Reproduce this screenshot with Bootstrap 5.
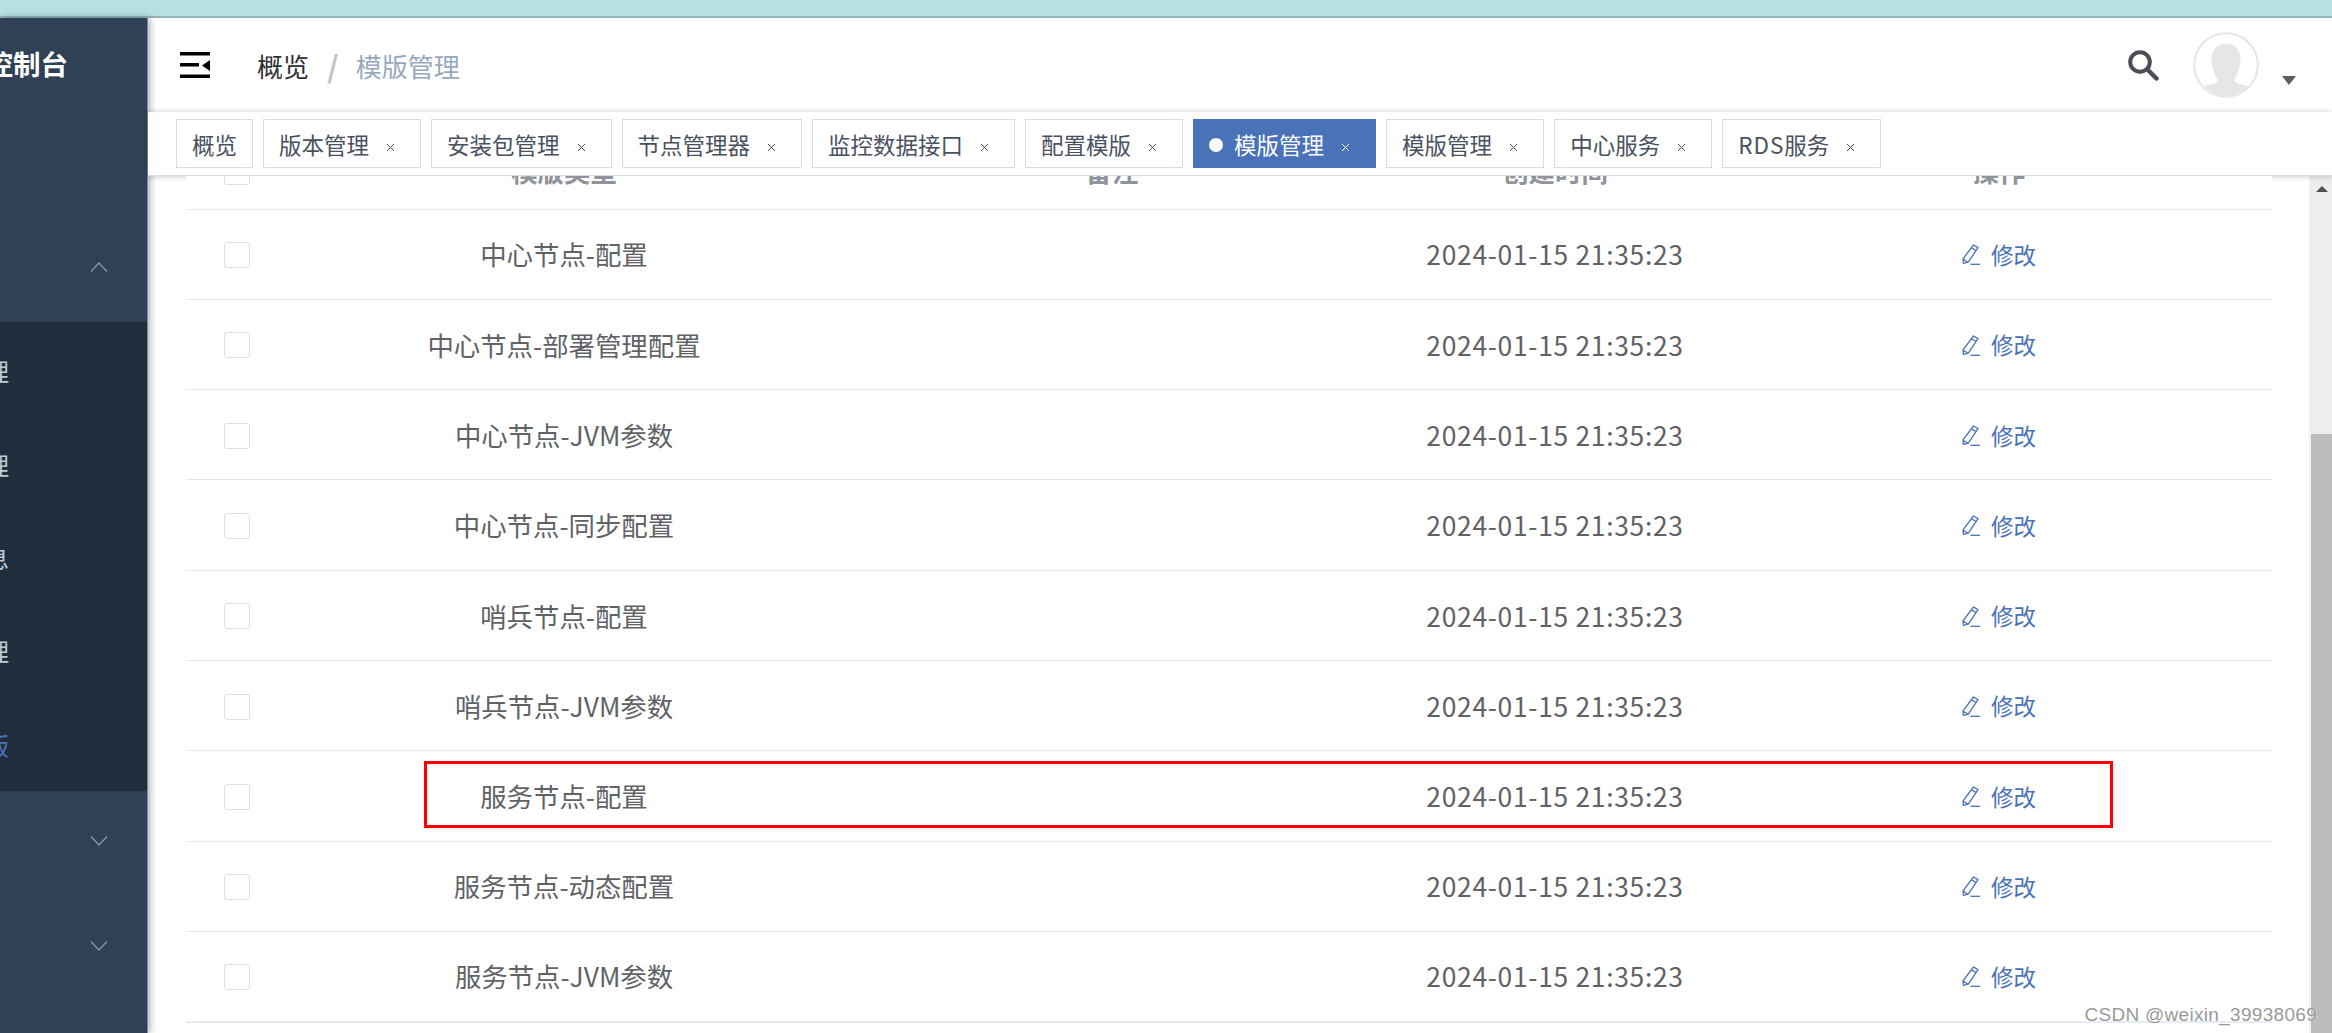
<!DOCTYPE html>
<html lang="zh-CN">
<head>
    <meta charset="utf-8">
    <title>模版管理</title>
    <link href="https://cdn.jsdelivr.net/npm/bootstrap@5.3.3/dist/css/bootstrap.min.css" rel="stylesheet">
    <style>
        html, body {
          height: 100%;
          overflow: hidden;
        }
        body {
          background: #fff;
          font-family: "Noto Sans CJK SC", "Liberation Sans", sans-serif;
          color: #606266;
        }
        .top-strip {
          height: 18px;
          flex: none;
          background: #b7e0e3;
          border-bottom: 2px solid #93b4b7;
        }
        .side-menu {
          width: 148px;
          flex: none;
          background: #304156;
          border-right: 1px solid #7f8a99;
          overflow: hidden;
          position: relative;
          z-index: 1;
          box-shadow: 2px 0 7px rgba(0, 21, 41, .35);
        }
        .side-title {
          height: 199px;
          padding-top: 27px;
          width: 68px;
          font-size: 27.5px;
          font-weight: 700;
          line-height: 36px;
          color: #fff;
          direction: rtl;
          white-space: nowrap;
        }
        .side-parent {
          height: 105px;
          padding: 0 39px 5px 0;
        }
        .side-sub {
          background: #1f2d3d;
          height: 469px;
        }
        .side-item {
          height: 93.4px;
          width: 9px;
          padding-top: 5px;
          font-size: 24px;
          color: #bfcbd9;
          direction: rtl;
          white-space: nowrap;
        }
        .side-item.on {
          color: #4a72b8;
        }
        .main-area {
          min-width: 0;
        }
        .head-bar {
          height: 94px;
          flex: none;
          padding: 0 36px 0 32px;
          background: #fff;
          position: relative;
          z-index: 0;
        }
        .crumb-now {
          margin-left: 47px;
          font-size: 26px;
          color: #303133;
        }
        .crumb-sep {
          margin: 0 17px 0 18px;
          font-size: 30px;
          line-height: 1;
          font-weight: 700;
          color: #c0c4cc;
        }
        .crumb-last {
          font-size: 26px;
          color: #97a8be;
        }
        .user-pic {
          margin-left: 34px;
        }
        .user-caret {
          width: 0;
          height: 0;
          margin: 31px 0 0 23px;
          border-left: 7px solid transparent;
          border-right: 7px solid transparent;
          border-top: 9px solid #5a5e66;
        }
        .tab-strip {
          height: 64px;
          flex: none;
          padding: 7px 0 0 28px;
          gap: 10px;
          background: #fff;
          border-bottom: 1px solid #d8dce5;
          box-shadow: 0 1px 5px rgba(0, 21, 41, .2), 0 -2px 4px rgba(0, 21, 41, .05);
          position: relative;
          z-index: 2;
        }
        .tab-item {
          height: 49px;
          padding: 2px 15px 0;
          border: 1px solid #d8dce5;
          background: #fff;
          font-size: 22.5px;
          color: #495060;
          white-space: nowrap;
        }
        .tab-item.on {
          background: #4a72b8;
          border-color: #4a72b8;
          color: #fff;
        }
        .tab-dot {
          width: 14px;
          height: 14px;
          margin-right: 11px;
          border-radius: 50%;
          background: #fff;
        }
        .tab-x {
          width: 9px;
          height: 9px;
          margin: 5px 10px 0 17px;
        }
        .tab-latin {
          letter-spacing: 1px;
        }
        .table-clip {
          min-width: 0;
          overflow: hidden;
          padding: 0 37px 0 38px;
        }
        .table-inner {
          position: relative;
          z-index: 3;
          background: #fff;
          margin-top: -42px;
        }
        .tpl-table {
          table-layout: fixed;
          width: 2086px;
          margin: 0;
          --bs-border-color: #e4e8ef;
          font-size: 26.4px;
          color: #606266;
        }
        .tpl-table th,
        .tpl-table td {
          padding: 0;
          color: inherit;
          vertical-align: middle;
          text-align: center;
        }
        .tpl-table th {
          height: 75px;
          color: #909399;
          font-weight: 700;
        }
        .tpl-table td {
          height: 90.3px;
        }
        .tpl-table tbody tr:last-child td {
          border-bottom: 2px solid #e6ebf5;
        }
        .date-cell {
          letter-spacing: .7px;
        }
        .tick-box {
          display: block;
          width: 26px;
          height: 26px;
          margin: 2px 0 0 38px;
          border: 1px solid #dcdfe6;
          border-radius: 3px;
          background: #fff;
        }
        .edit-link {
          margin-top: -4px;
          font-size: 22.5px;
          color: #4a72b8;
          text-decoration: none;
          gap: 11px;
        }
        .red-frame {
          position: absolute;
          left: 238px;
          width: 1689px;
          top: 627px;
          height: 67px;
          border: 3px solid #f00;
          pointer-events: none;
        }
        .scroll-rail {
          width: 23px;
          flex: none;
          background: #ededed;
          border-left: 2px solid #f1f1f1;
        }
        .scroll-up {
          width: 0;
          height: 0;
          margin: 10px auto 0;
          border-left: 6px solid transparent;
          border-right: 6px solid transparent;
          border-bottom: 6px solid #505050;
        }
        .scroll-thumb {
          margin-top: 242px;
          background: #bcbcbc;
        }
        .stamp {
          position: absolute;
          right: 15px;
          bottom: 8px;
          z-index: 5;
          font-family: "Liberation Sans", sans-serif;
          font-size: 19px;
          line-height: 20px;
          letter-spacing: .3px;
          color: #999;
          text-shadow: 0 0 2px #fff;
        }
    </style>
</head>
<body class="d-flex flex-column">

<div class="top-strip"></div>

<svg class="d-none">
    <symbol id="pen" viewBox="0 0 18 21">
        <path d="M11.5 1 16 3.6 6.3 18.2 1.4 19.4 1 14.8Z M9.6 3.900 14 6.500 M1.200 15.400 5.800 18" fill="none" stroke="currentColor" stroke-width="1.300" stroke-linejoin="round"/>
        <path d="M8.500 20.300H18" fill="none" stroke="currentColor" stroke-width="1.300"/>
    </symbol>
    <symbol id="x-mark" viewBox="0 0 9 9">
        <path d="M1 1 8 8M8 1 1 8" fill="none" stroke="currentColor" stroke-width="1"/>
    </symbol>
</svg>

<div class="d-flex flex-grow-1" style="min-height:0">

    <!-- Sidebar, cut off at the left edge of the picture -->
    <div class="side-menu">
        <div class="side-title">控制台</div>
        <div class="side-parent d-flex align-items-center justify-content-end">
            <svg width="18" height="10" viewBox="0 0 18 10"><path d="M1 9.500 9 1l8 8.500" fill="none" stroke="#8d97a5" stroke-width="1.200"/></svg>
        </div>
        <div class="side-sub">
            <div class="side-item d-flex align-items-center">版本管理</div>
            <div class="side-item d-flex align-items-center">安装包管理</div>
            <div class="side-item d-flex align-items-center">监控信息</div>
            <div class="side-item d-flex align-items-center">节点管理</div>
            <div class="side-item on d-flex align-items-center">配置模版</div>
        </div>
        <div class="side-parent d-flex align-items-center justify-content-end">
            <svg width="18" height="10" viewBox="0 0 18 10"><path d="M1 .5 9 9l8-8.500" fill="none" stroke="#8d97a5" stroke-width="1.200"/></svg>
        </div>
        <div class="side-parent d-flex align-items-center justify-content-end">
            <svg width="18" height="10" viewBox="0 0 18 10"><path d="M1 .5 9 9l8-8.500" fill="none" stroke="#8d97a5" stroke-width="1.200"/></svg>
        </div>
    </div>

    <div class="main-area flex-grow-1 d-flex flex-column">

        <!-- Header -->
        <div class="head-bar d-flex align-items-center">
            <svg width="30" height="26" viewBox="0 0 30 26">
                <path d="M0 0h30v3.400H0zM0 11h19v3.600H0zM0 22.600h30V26H0zM30 8v11l-8-5.500z" fill="#000"/>
            </svg>
            <span class="crumb-now">概览</span>
            <span class="crumb-sep">/</span>
            <span class="crumb-last">模版管理</span>
            <svg class="ms-auto" width="31" height="31" viewBox="0 0 31 31">
                <circle cx="12" cy="12" r="9.800" fill="none" stroke="#4a4f57" stroke-width="4"/>
                <path d="M19.500 19.500 28.500 28.500" fill="none" stroke="#4a4f57" stroke-width="4.500" stroke-linecap="round"/>
            </svg>
            <svg class="user-pic" width="66" height="66" viewBox="0 0 66 66">
                <circle cx="33" cy="33" r="31.800" fill="#fff" stroke="#e6e6e6" stroke-width="2"/>
                <path d="M33 12c9 0 14.500 6 14.500 15 0 8-3 16-6.500 21l2 3 12 3c-5 6-13 10-22 10s-17-4-22-10l12-3 2-3c-3.500-5-6.500-13-6.500-21 0-9 5.500-15 14.500-15z" fill="#e6e6e6"/>
            </svg>
            <div class="user-caret"></div>
        </div>

        <!-- Open pages -->
        <div class="tab-strip d-flex align-items-start">
            <div class="tab-item d-flex align-items-center">概览</div>
            <div class="tab-item d-flex align-items-center">版本管理<svg class="tab-x"><use href="#x-mark"/></svg></div>
            <div class="tab-item d-flex align-items-center">安装包管理<svg class="tab-x"><use href="#x-mark"/></svg></div>
            <div class="tab-item d-flex align-items-center">节点管理器<svg class="tab-x"><use href="#x-mark"/></svg></div>
            <div class="tab-item d-flex align-items-center">监控数据接口<svg class="tab-x"><use href="#x-mark"/></svg></div>
            <div class="tab-item d-flex align-items-center">配置模版<svg class="tab-x"><use href="#x-mark"/></svg></div>
            <div class="tab-item on d-flex align-items-center"><span class="tab-dot"></span>模版管理<svg class="tab-x"><use href="#x-mark"/></svg></div>
            <div class="tab-item d-flex align-items-center">模版管理<svg class="tab-x"><use href="#x-mark"/></svg></div>
            <div class="tab-item d-flex align-items-center">中心服务<svg class="tab-x"><use href="#x-mark"/></svg></div>
            <div class="tab-item d-flex align-items-center"><span class="tab-latin">RDS</span>服务<svg class="tab-x"><use href="#x-mark"/></svg></div>
        </div>

        <div class="d-flex flex-grow-1" style="min-height:0">
            <div class="table-clip flex-grow-1">
                <div class="table-inner">
                    <table class="table tpl-table">
                        <colgroup>
                            <col style="width:102px"><col style="width:552px"><col style="width:544px"><col style="width:342px"><col style="width:546px">
                        </colgroup>
                        <thead>
                            <tr><th><span class="tick-box"></span></th><th>模版类型</th><th>备注</th><th>创建时间</th><th>操作</th></tr>
                        </thead>
                        <tbody>
                            <tr><td><span class="tick-box"></span></td><td>中心节点-配置</td><td></td><td class="date-cell">2024-01-15 21:35:23</td><td><a class="edit-link d-inline-flex align-items-center" href="#"><svg width="18" height="21"><use href="#pen"/></svg>修改</a></td></tr>
                            <tr><td><span class="tick-box"></span></td><td>中心节点-部署管理配置</td><td></td><td class="date-cell">2024-01-15 21:35:23</td><td><a class="edit-link d-inline-flex align-items-center" href="#"><svg width="18" height="21"><use href="#pen"/></svg>修改</a></td></tr>
                            <tr><td><span class="tick-box"></span></td><td>中心节点-JVM参数</td><td></td><td class="date-cell">2024-01-15 21:35:23</td><td><a class="edit-link d-inline-flex align-items-center" href="#"><svg width="18" height="21"><use href="#pen"/></svg>修改</a></td></tr>
                            <tr><td><span class="tick-box"></span></td><td>中心节点-同步配置</td><td></td><td class="date-cell">2024-01-15 21:35:23</td><td><a class="edit-link d-inline-flex align-items-center" href="#"><svg width="18" height="21"><use href="#pen"/></svg>修改</a></td></tr>
                            <tr><td><span class="tick-box"></span></td><td>哨兵节点-配置</td><td></td><td class="date-cell">2024-01-15 21:35:23</td><td><a class="edit-link d-inline-flex align-items-center" href="#"><svg width="18" height="21"><use href="#pen"/></svg>修改</a></td></tr>
                            <tr><td><span class="tick-box"></span></td><td>哨兵节点-JVM参数</td><td></td><td class="date-cell">2024-01-15 21:35:23</td><td><a class="edit-link d-inline-flex align-items-center" href="#"><svg width="18" height="21"><use href="#pen"/></svg>修改</a></td></tr>
                            <tr><td><span class="tick-box"></span></td><td>服务节点-配置</td><td></td><td class="date-cell">2024-01-15 21:35:23</td><td><a class="edit-link d-inline-flex align-items-center" href="#"><svg width="18" height="21"><use href="#pen"/></svg>修改</a></td></tr>
                            <tr><td><span class="tick-box"></span></td><td>服务节点-动态配置</td><td></td><td class="date-cell">2024-01-15 21:35:23</td><td><a class="edit-link d-inline-flex align-items-center" href="#"><svg width="18" height="21"><use href="#pen"/></svg>修改</a></td></tr>
                            <tr><td><span class="tick-box"></span></td><td>服务节点-JVM参数</td><td></td><td class="date-cell">2024-01-15 21:35:23</td><td><a class="edit-link d-inline-flex align-items-center" href="#"><svg width="18" height="21"><use href="#pen"/></svg>修改</a></td></tr>
                        </tbody>
                    </table>
                    <!-- hand-drawn highlight on the screenshot -->
                    <div class="red-frame"></div>
                </div>
            </div>
            <div class="scroll-rail d-flex flex-column">
                <div class="scroll-up"></div>
                <div class="scroll-thumb flex-grow-1"></div>
            </div>
        </div>
    </div>
</div>

<div class="stamp">CSDN @weixin_39938069</div>

</body>
</html>
